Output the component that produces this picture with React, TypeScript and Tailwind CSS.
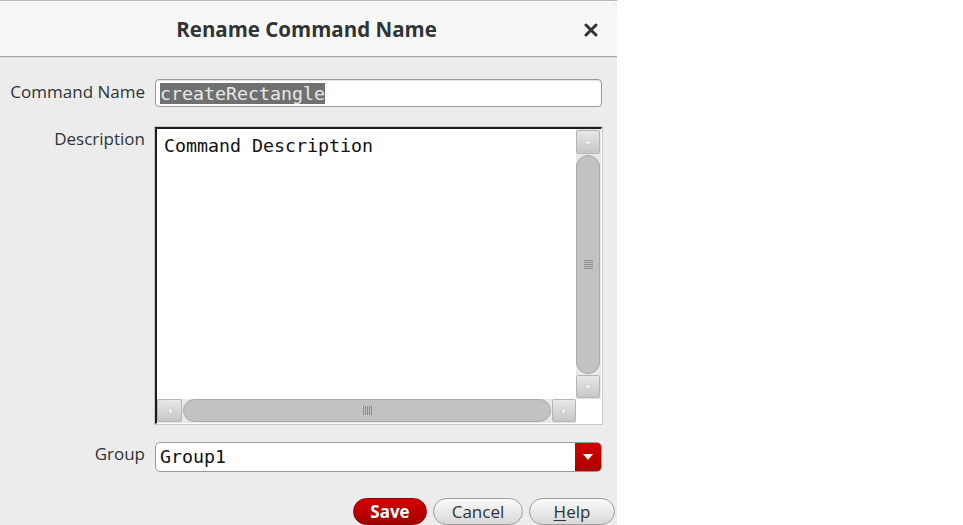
import React from "react";

const ScrollBtn = ({ dir }: { dir: "up" | "down" | "left" | "right" }) => {
  const rot = { up: "rotate-180", down: "", left: "rotate-90", right: "-rotate-90" }[dir];
  return (
    <div className="flex-1 flex items-center justify-center bg-gradient-to-b from-[#e8e8e8] to-[#c6c6c6] border border-[#b5b5b5] rounded-[2px]">
      <svg width="10" height="8" viewBox="0 0 10 8" className={rot}>
        <path d="M1 2 L9 2 L5 6 Z" fill="#f4f4f4" stroke="#bdbdbd" strokeWidth="0.6" />
      </svg>
    </div>
  );
};

const mono = { fontFamily: "'DejaVu Sans Mono', monospace" };

const App = () => {
  return (
    <div className="w-[963px] h-[525px] bg-white flex overflow-hidden" style={{ fontFamily: "'Open Sans', 'DejaVu Sans', sans-serif" }}>
      <div className="w-[617px] h-full flex flex-col bg-[#ececec]">
        <div className="h-[3px] bg-[#f8f8f8] border-t border-[#b8b8b8]" />
        {/* title bar */}
        <div className="h-[54px] bg-[#f7f7f7] rounded-tr-[7px] border-b border-[#a8a8a8] flex items-center relative">
          <div className="flex-1 text-center text-[20.5px] font-bold text-[#2e3436] -ml-[4px]">Rename Command Name</div>
          <div className="absolute right-[19px] top-[20px]">
            <svg width="14" height="14" viewBox="0 0 14 14">
              <path d="M2 2 L12 12 M12 2 L2 12" stroke="#2e3436" strokeWidth="3" strokeLinecap="round" />
            </svg>
          </div>
        </div>

        {/* body */}
        <div className="flex-1 flex flex-col pt-[21px] pr-[15px] border-t border-[#d8d8d8]">
          <div className="flex items-center">
            <div className="w-[145px] text-right text-[17px] text-[#2e3436] -mt-[3px]">Command Name</div>
            <div className="ml-[10px] flex-1 h-[28px] bg-white border border-[#9a9a9a] rounded-[4px] flex items-center px-[4px] shadow-[inset_0_1px_1px_rgba(0,0,0,0.12)]">
              <span className="bg-[#707070] text-[#e8e8e8] text-[18.3px] leading-[21px]" style={mono}>createRectangle</span>
            </div>
          </div>

          <div className="flex mt-[20px]">
            <div className="w-[145px] text-right text-[17px] text-[#2e3436] -mt-[1px]">Description</div>
            <div className="ml-[10px] flex-1 h-[297px] border-t-[2px] border-l-[2px] border-[#1c1c1c] border-r border-b border-r-white border-b-white outline outline-1 outline-[#c9c9c9] bg-white grid grid-cols-[1fr_25px] grid-rows-[1fr_24px]">
              <div className="pl-[7px] pt-[6px] text-[18.3px] leading-[21px] text-[#111]" style={mono}>
                Command Description
              </div>
              {/* vertical scrollbar */}
              <div className="flex flex-col py-[1px] pr-[1px] bg-[#e8e8e8]">
                <div className="h-[24px] flex flex-col"><ScrollBtn dir="up" /></div>
                <div className="flex-1 flex my-[1px]">
                  <div className="flex-1 rounded-full bg-[#c2c2c2] border border-[#a9a9a9] flex items-center justify-center">
                    <div className="flex flex-col gap-[1px]">
                      <div className="w-[9px] h-[1px] bg-[#8c8c8c]" />
                      <div className="w-[9px] h-[1px] bg-[#8c8c8c]" />
                      <div className="w-[9px] h-[1px] bg-[#8c8c8c]" />
                      <div className="w-[9px] h-[1px] bg-[#8c8c8c]" />
                      <div className="w-[9px] h-[1px] bg-[#8c8c8c]" />
                    </div>
                  </div>
                </div>
                <div className="h-[23px] flex flex-col"><ScrollBtn dir="down" /></div>
              </div>
              {/* horizontal scrollbar */}
              <div className="flex bg-[#e8e8e8] pb-[1px]">
                <div className="w-[25px] flex flex-col"><ScrollBtn dir="left" /></div>
                <div className="flex-1 flex mx-[1px]">
                  <div className="flex-1 rounded-full bg-[#c2c2c2] border border-[#a9a9a9] flex items-center justify-center">
                    <div className="flex gap-[1px]">
                      <div className="h-[9px] w-[1px] bg-[#8c8c8c]" />
                      <div className="h-[9px] w-[1px] bg-[#8c8c8c]" />
                      <div className="h-[9px] w-[1px] bg-[#8c8c8c]" />
                      <div className="h-[9px] w-[1px] bg-[#8c8c8c]" />
                      <div className="h-[9px] w-[1px] bg-[#8c8c8c]" />
                    </div>
                  </div>
                </div>
                <div className="w-[24px] flex flex-col"><ScrollBtn dir="right" /></div>
              </div>
              <div className="bg-white" />
            </div>
          </div>

          <div className="flex items-center mt-[18px]">
            <div className="w-[145px] text-right text-[17px] text-[#2e3436] -mt-[6px]">Group</div>
            <div className="ml-[10px] flex-1 h-[30px] bg-white border border-[#9a9a9a] rounded-[5px] flex items-center overflow-hidden">
              <div className="flex-1 pl-[4px] text-[18.3px] text-[#111]" style={mono}>Group1</div>
              <div className="w-[26px] h-full bg-gradient-to-b from-[#d40000] to-[#a80000] flex items-center justify-center">
                <svg width="10" height="6" viewBox="0 0 10 6"><path d="M0 0 L10 0 L5 6 Z" fill="#fff" /></svg>
              </div>
            </div>
          </div>

          <div className="flex justify-end gap-[6px] mt-[26px] -mr-[13px]">
            <button className="w-[74px] h-[27px] rounded-full bg-gradient-to-b from-[#d80000] to-[#a00000] border border-[#8a0000] text-white font-bold text-[17px] leading-none">Save</button>
            <button className="w-[90px] h-[27px] rounded-full bg-gradient-to-b from-[#fbfbfb] to-[#d8d8d8] border border-[#9c9c9c] text-[#2e3436] text-[17px] leading-none">Cancel</button>
            <button className="w-[86px] h-[27px] rounded-full bg-gradient-to-b from-[#fbfbfb] to-[#d8d8d8] border border-[#9c9c9c] text-[#2e3436] text-[17px] leading-none"><span className="underline underline-offset-2">H</span>elp</button>
          </div>
        </div>
      </div>
    </div>
  );
};

export default App;
